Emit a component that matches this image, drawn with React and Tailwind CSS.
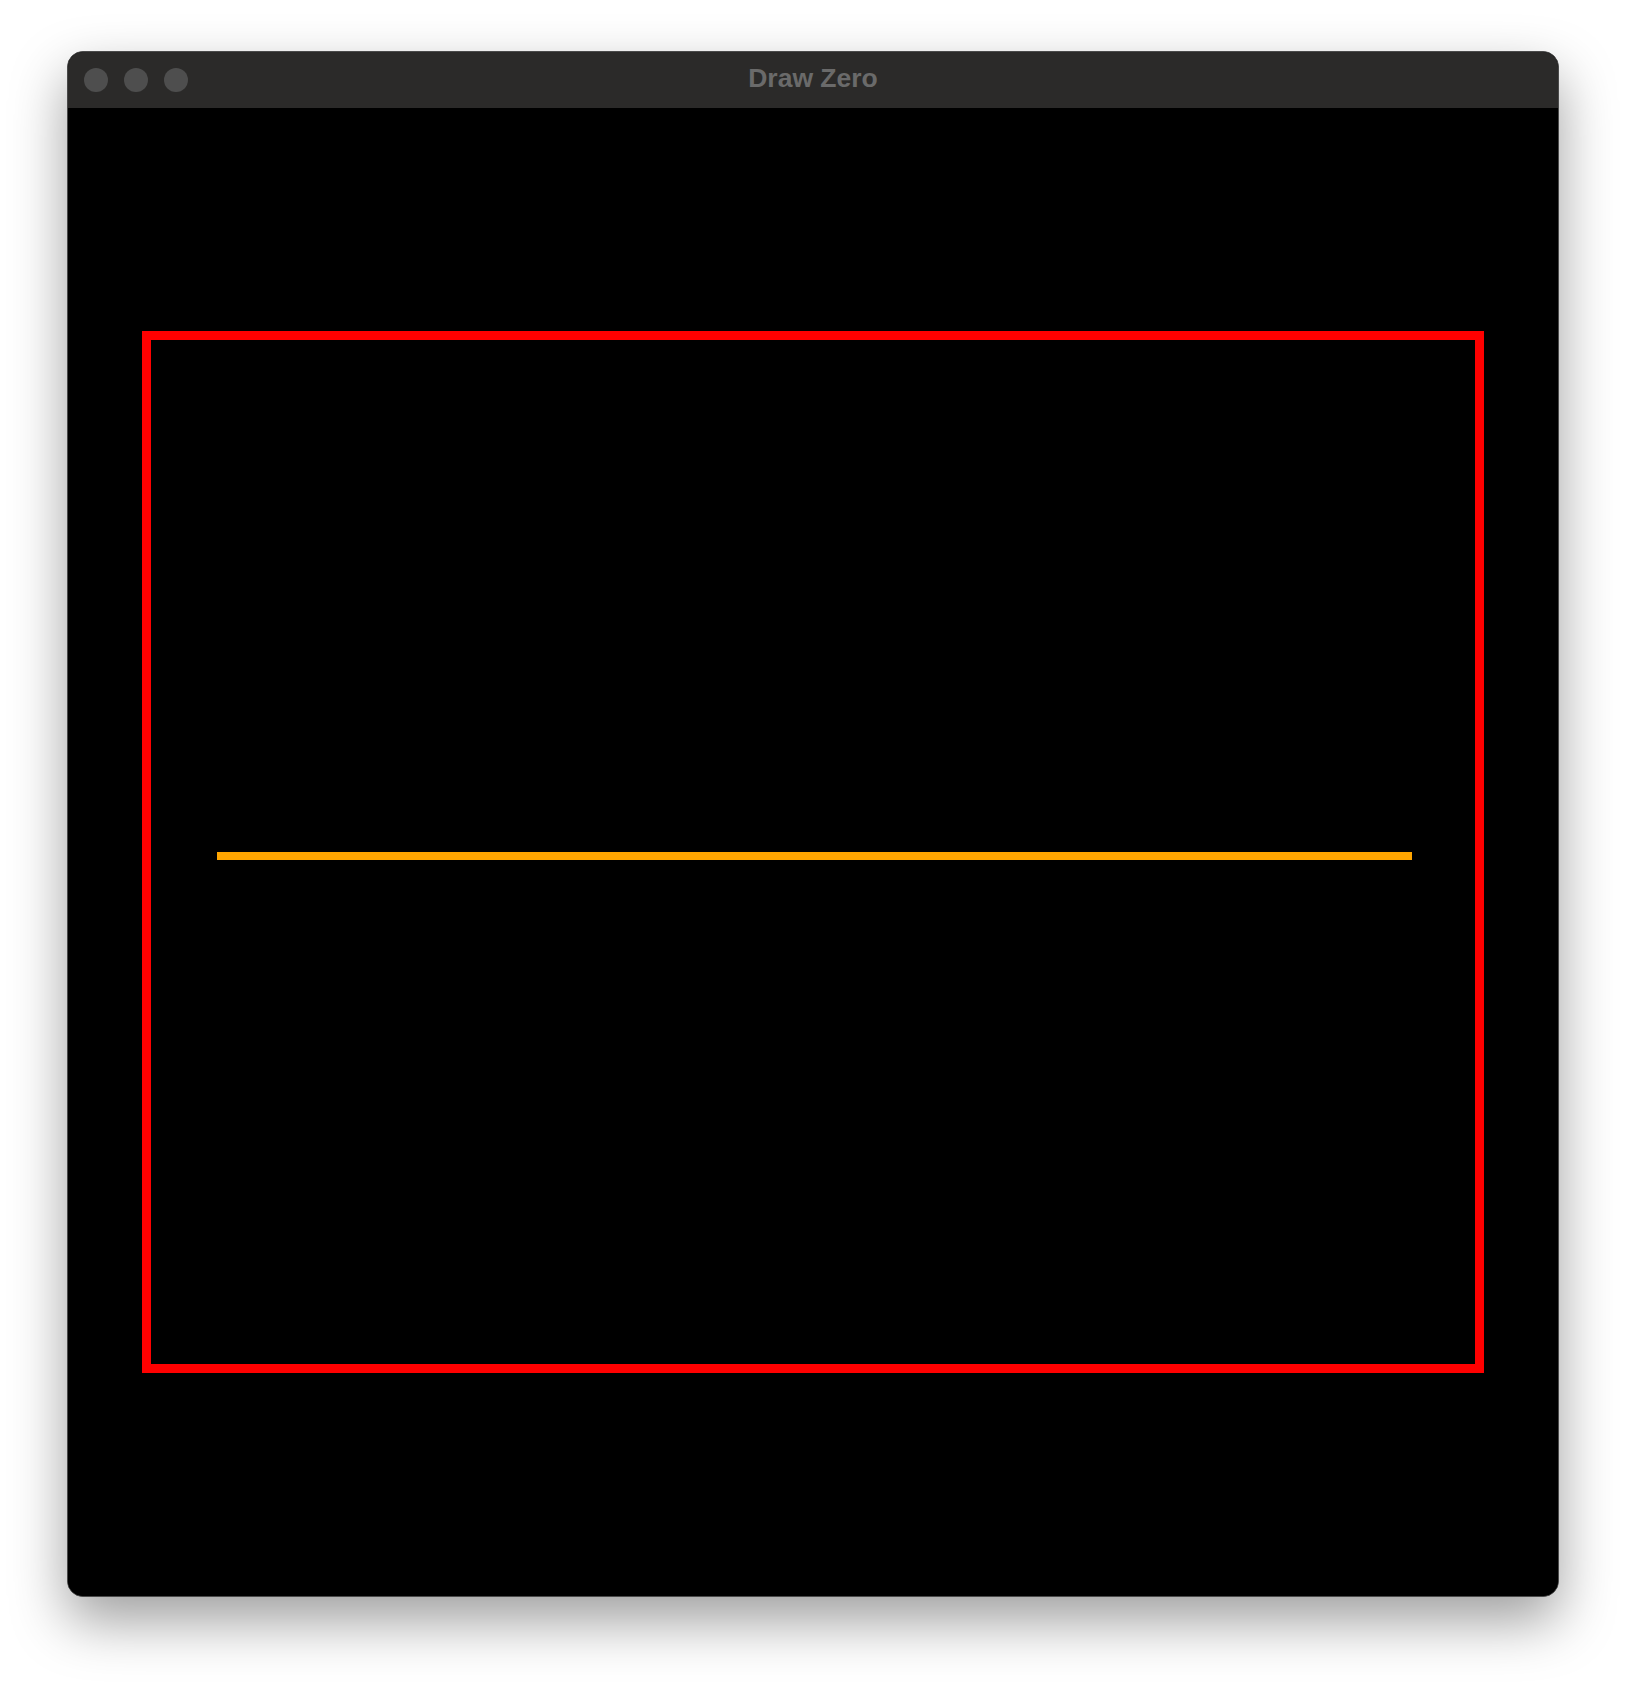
import React from 'react';

// Fenêtre macOS avec un rectangle rouge et une ligne orange
const TrafficLight = () => (
  <div className="w-6 h-6 rounded-full bg-[#4e4e4e]" />
);

const App = () => {
  return (
    <div className="w-[1626px] h-[1682px] bg-white pt-[51px] pl-[67px]">
      <div className="w-[1492px] h-[1546px] flex flex-col rounded-[16px] overflow-hidden border border-[#4a4a4a] bg-black shadow-[0_24px_55px_rgba(0,0,0,0.38)]">
        {/* Barre de titre */}
        <div className="relative h-[56px] flex items-center bg-[#2b2a29] pl-[16px] gap-4">
          <TrafficLight />
          <TrafficLight />
          <TrafficLight />
          <div
            className="absolute inset-0 pb-[3px] flex items-center justify-center text-[26.5px] font-bold text-[#6a6a6a]"
            style={{ fontFamily: '"Liberation Sans", Arial, sans-serif' }}
          >
            Draw Zero
          </div>
        </div>

        {/* Zone de dessin */}
        <div className="flex-1 bg-black flex items-center justify-center">
          <div className="w-[1342px] h-[1042px] border-[9px] border-[#ff0000] pt-[512px] pl-[66px]">
            <div className="w-[1195px] h-[8px] bg-[#ffa500]" />
          </div>
        </div>
      </div>
    </div>
  );
};

export default App;
